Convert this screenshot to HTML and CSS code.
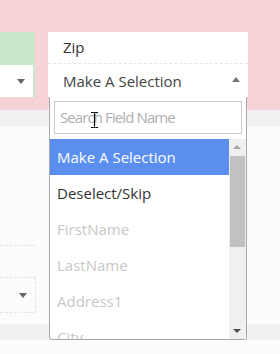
FILE: index.html
```html
<!DOCTYPE html>
<html lang="en">
<head>
  <meta charset="UTF-8">
  <title>Field mapping</title>
  <link rel="stylesheet" href="styles.css">
</head>
<body>
  <div class="page">
    <div class="header">
      <div class="side">
        <div class="side-top"></div>
        <div class="side-select"><span class="caret-down"></span></div>
      </div>
      <div class="panel">
        <div class="panel-label">Zip</div>
        <div class="panel-select">
          <span>Make A Selection</span>
          <span class="caret-up"></span>
        </div>
      </div>
    </div>
    <div class="strip"></div>
    <div class="body">
      <div class="dash-line"></div>
      <div class="low-select"><span class="caret-down"></span></div>
    </div>
    <div class="strip bottom"></div>

    <div class="dropdown">
      <div class="search">
        <input type="text" placeholder="Search Field Name">
      </div>
      <div class="list-wrap">
        <ul class="list">
          <li class="active">Make A Selection</li>
          <li>Deselect/Skip</li>
          <li class="off">FirstName</li>
          <li class="off">LastName</li>
          <li class="off">Address1</li>
          <li class="off">City</li>
        </ul>
        <div class="scrollbar">
          <div class="sb-btn"><span class="sb-up"></span></div>
          <div class="sb-thumb"></div>
          <div class="sb-track"></div>
          <div class="sb-btn"><span class="sb-down"></span></div>
        </div>
      </div>
    </div>

    <svg class="ibeam" width="9" height="18" viewBox="0 0 9 18">
      <path d="M1 1.5h2.5M5.5 1.5H8M4.5 2.5v13M1 16.5h2.5M5.5 16.5H8" stroke="#000" stroke-width="1.2" fill="none"/>
      <path d="M3.5 1.5h2M3.5 16.5h2" stroke="#000" stroke-width="1.2"/>
    </svg>
  </div>
</body>
</html>
```
FILE: styles.css
```css
* {
  box-sizing: border-box;
}

body {
  margin: 0;
  font-family: "Open Sans", "Noto Sans", sans-serif;
  background: #fcfcfc;
}

.page {
  position: relative;
  width: 280px;
  height: 354px;
  overflow: hidden;
}

.header {
  height: 110px;
  background: #f6d3d7;
  padding-top: 32px;
  display: flex;
  gap: 13px;
  align-items: flex-start;
}

.side {
  width: 35px;
  height: 65px;
  background: #c9e7cb;
  display: flex;
  flex-direction: column;
}

.side-top {
  height: 33px;
}

.side-select {
  height: 32px;
  width: 33px;
  background: #fff;
  position: relative;
}

.caret-down,
.caret-up {
  position: absolute;
  width: 0;
  height: 0;
  border-left: 4px solid transparent;
  border-right: 4px solid transparent;
}

.caret-down {
  border-top: 5px solid #666;
  right: 8px;
  top: 14px;
}

.caret-up {
  border-bottom: 5px solid #777;
  right: 8px;
  top: 13px;
}

.panel {
  width: 200px;
  background: #fff;
}

.panel-label {
  height: 32px;
  line-height: 31px;
  padding-left: 15px;
  font-size: 15px;
  color: #333;
  border-bottom: 1px dashed #e6e6e6;
}

.panel-select {
  position: relative;
  height: 33px;
  line-height: 35px;
  padding-left: 15px;
  font-size: 15px;
  color: #444;
}

.strip {
  height: 16px;
  background: #f1f1f2;
}

.body {
  height: 198px;
  padding-top: 119px;
}

.dash-line {
  width: 36px;
  border-top: 1px dashed #e4e4e4;
}

.low-select {
  position: relative;
  margin-top: 31px;
  width: 36px;
  height: 36px;
  border-top: 1px dashed #e4e4e4;
  border-bottom: 1px dashed #e4e4e4;
  border-right: 1px dashed #e4e4e4;
}

.low-select .caret-down {
  top: 15px;
  right: 8px;
}

.dropdown {
  position: absolute;
  left: 49px;
  top: 97px;
  width: 198px;
  height: 243px;
  background: #fff;
  border: 1px solid #a8a8a8;
  border-top: none;
  border-radius: 0 0 3px 3px;
  display: flex;
  flex-direction: column;
}

.search {
  padding: 4px 4px 5px 4px;
}

.search input {
  width: 100%;
  height: 33px;
  border: 1px solid #c8c8c8;
  padding: 0 5px;
  font-family: inherit;
  font-size: 13px;
  color: #333;
  outline: none;
}

.search input::placeholder {
  color: #b0b0b0;
  font-size: 15px;
  letter-spacing: -0.9px;
}

.list-wrap {
  flex: 1;
  display: flex;
  overflow: hidden;
}

.list {
  flex: 1;
  margin: 0;
  padding: 0;
  list-style: none;
  overflow: hidden;
}

.list li {
  height: 36px;
  line-height: 36px;
  padding-left: 7px;
  font-size: 15px;
  color: #333;
  white-space: nowrap;
}

.list li.active {
  background: #5a8ff0;
  color: #fff;
}

.list li.off {
  color: #c8c8c8;
}

.scrollbar {
  width: 17px;
  background: #f0f0f0;
  display: flex;
  flex-direction: column;
}

.sb-btn {
  height: 17px;
  position: relative;
}

.sb-up,
.sb-down {
  position: absolute;
  left: 4px;
  width: 0;
  height: 0;
  border-left: 4px solid transparent;
  border-right: 4px solid transparent;
}

.sb-up {
  top: 6px;
  border-bottom: 4px solid #a3a3a3;
}

.sb-down {
  top: 7px;
  border-top: 4px solid #505050;
}

.sb-thumb {
  height: 91px;
  margin: 0 1px;
  background: #c1c1c1;
}

.sb-track {
  flex: 1;
}

.ibeam {
  position: absolute;
  left: 90px;
  top: 111px;
}
```
